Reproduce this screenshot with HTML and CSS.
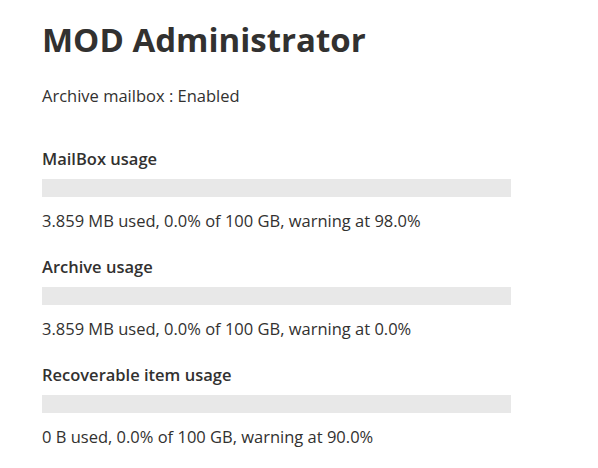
FILE: index.html
```html
<!DOCTYPE html>
<html>
<head>
<meta charset="utf-8">
<link rel="stylesheet" href="styles.css">
</head>
<body>
<div class="page">
  <h1 class="title">MOD Administrator</h1>
  <p class="archive">Archive mailbox : Enabled</p>
  <section class="usage first">
    <h2 class="usage-heading">MailBox usage</h2>
    <div class="bar"><div class="bar-fill" style="width:0%"></div></div>
    <p class="usage-text">3.859 MB used, 0.0% of 100 GB, warning at 98.0%</p>
  </section>
  <section class="usage">
    <h2 class="usage-heading">Archive usage</h2>
    <div class="bar"><div class="bar-fill" style="width:0%"></div></div>
    <p class="usage-text">3.859 MB used, 0.0% of 100 GB, warning at 0.0%</p>
  </section>
  <section class="usage">
    <h2 class="usage-heading">Recoverable item usage</h2>
    <div class="bar"><div class="bar-fill" style="width:0%"></div></div>
    <p class="usage-text">0 B used, 0.0% of 100 GB, warning at 90.0%</p>
  </section>
</div>
</body>
</html>
```
FILE: styles.css
```css
html, body {
  margin: 0;
  padding: 0;
  background: #ffffff;
}
body {
  font-family: "Open Sans", "Noto Sans", sans-serif;
  color: #323130;
}
.page {
  padding: 20px 0 0 42px;
}
.title {
  margin: 0;
  font-size: 33px;
  font-weight: 700;
  line-height: 40px;
}
.archive {
  margin: 26px 0 0;
  font-size: 16.5px;
  line-height: 20px;
}
.usage {
  margin-top: 26px;
}
.usage.first {
  margin-top: 43px;
}
.usage-heading {
  margin: 0;
  font-size: 16.5px;
  font-weight: 600;
  line-height: 20px;
}
.bar {
  margin-top: 10px;
  width: 469px;
  height: 18px;
  background: #e8e8e8;
}
.bar-fill {
  height: 100%;
  background: #0078d4;
}
.usage-text {
  margin: 14px 0 0;
  font-size: 16.5px;
  line-height: 20px;
}
```
